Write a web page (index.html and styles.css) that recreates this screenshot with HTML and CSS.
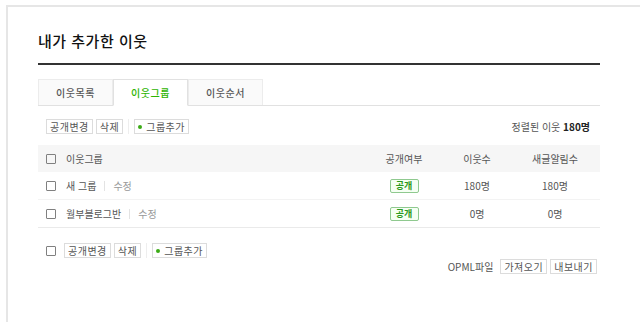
FILE: index.html
```html
<!DOCTYPE html>
<html lang="ko">
<head>
  <meta charset="UTF-8">
  <title>내가 추가한 이웃</title>
  <link rel="stylesheet" href="styles.css">
</head>
<body>
  <div class="frame">
    <div class="content">
      <h1 class="title">내가 추가한 이웃</h1>

      <ul class="tabs">
        <li class="tab">이웃목록</li>
        <li class="tab on">이웃그룹</li>
        <li class="tab">이웃순서</li>
      </ul>

      <div class="toolbar">
        <div class="btns">
          <span class="btn">공개변경</span>
          <span class="btn">삭제</span>
          <span class="sep"></span>
          <span class="btn"><i class="dot"></i>그룹추가</span>
        </div>
        <div class="count">정렬된 이웃 <b>180명</b></div>
      </div>

      <table class="grid">
        <thead>
          <tr>
            <th class="c-name"><span class="chk"></span>이웃그룹</th>
            <th class="c-open">공개여부</th>
            <th class="c-num">이웃수</th>
            <th class="c-alarm">새글알림수</th>
          </tr>
        </thead>
        <tbody>
          <tr>
            <td class="c-name"><span class="chk"></span>새 그룹<span class="bar"></span><span class="edit">수정</span></td>
            <td class="c-open"><span class="badge">공개</span></td>
            <td class="c-num">180명</td>
            <td class="c-alarm">180명</td>
          </tr>
          <tr>
            <td class="c-name"><span class="chk"></span>월부블로그반<span class="bar"></span><span class="edit">수정</span></td>
            <td class="c-open"><span class="badge">공개</span></td>
            <td class="c-num">0명</td>
            <td class="c-alarm">0명</td>
          </tr>
        </tbody>
      </table>

      <div class="footer-bar">
        <span class="chk"></span>
        <span class="btn">공개변경</span>
        <span class="btn">삭제</span>
        <span class="sep"></span>
        <span class="btn"><i class="dot"></i>그룹추가</span>
      </div>

      <div class="opml">
        <span class="opml-label">OPML파일</span>
        <span class="btn">가져오기</span>
        <span class="btn">내보내기</span>
      </div>
    </div>
  </div>
</body>
</html>
```

FILE: styles.css
```css
body {
  margin: 0;
  background: #fff;
  font-family: "Noto Sans CJK KR", "Noto Sans", sans-serif;
  font-size: 10px;
  color: #555;
}
.frame {
  margin: 5px 0 0 6px;
  border-top: 2px solid #e6e6e6;
  border-left: 2px solid #e6e6e6;
  height: 320px;
}
.content {
  width: 562px;
  margin-left: 30px;
  padding-top: 23px;
}
.title {
  margin: 0;
  font-size: 15px;
  font-weight: 500;
  color: #111;
  line-height: 22px;
  padding-bottom: 11px;
  border-bottom: 2px solid #333;
  letter-spacing: 0.5px;
}
.tabs {
  list-style: none;
  margin: 14px 0 0;
  padding: 0;
  display: flex;
  border-bottom: 1px solid #e1e1e1;
}
.tab {
  width: 73px;
  height: 25px;
  line-height: 25px;
  text-align: center;
  background: #fafafa;
  border: 1px solid #ececec;
  border-bottom: none;
  margin-bottom: -1px;
  color: #555;
  font-weight: 500;
  letter-spacing: 0.5px;
}
.tab.on {
  background: #fff;
  border-color: #e1e1e1;
  border-bottom: 1px solid #fff;
  color: #2db400;
}
.toolbar {
  display: flex;
  justify-content: space-between;
  align-items: center;
  height: 15px;
  margin-top: 13px;
  padding-left: 8px;
  padding-right: 10px;
}
.btns, .footer-bar {
  display: flex;
  align-items: center;
  gap: 3px;
}
.btn {
  display: inline-flex;
  align-items: center;
  height: 13px;
  padding: 0 3px;
  border: 1px solid #dcdcdc;
  background: #fff;
  color: #555;
  font-size: 10px;
  letter-spacing: 0.5px;
}
.sep {
  width: 1px;
  height: 15px;
  background: #eee;
  margin: 0 2px;
}
.dot {
  display: inline-block;
  width: 4px;
  height: 4px;
  border-radius: 50%;
  background: #3bab16;
  margin-right: 4px;
}
.count b {
  color: #222;
}
.grid {
  width: 100%;
  border-collapse: collapse;
  margin-top: 11px;
  line-height: 1;
}
.grid th {
  background: #f6f6f6;
  font-weight: normal;
  height: 27px;
  padding: 0;
  color: #555;
}
.grid td {
  height: 27px;
  padding: 0;
  border-bottom: 1px solid #eaeaea;
  color: #555;
}
.grid tbody tr:first-child td {
  border-bottom-color: #f3f3f3;
}
.grid .c-name {
  text-align: left;
  padding-left: 8px;
}
.c-open { width: 80px; text-align: center; }
.c-num { width: 66px; text-align: center; }
.c-alarm { width: 90px; text-align: center; }
.chk {
  display: inline-block;
  width: 8px;
  height: 8px;
  border: 1px solid #808080;
  border-radius: 1px;
  margin-right: 10px;
  vertical-align: -1px;
}
.bar {
  display: inline-block;
  width: 1px;
  height: 10px;
  background: #e3e3e3;
  margin: 0 8px;
  vertical-align: -1px;
}
.edit {
  color: #999;
}
.badge {
  display: inline-block;
  width: 27px;
  height: 12px;
  line-height: 12px;
  border: 1px solid #8fc98f;
  border-radius: 2px;
  background: #f5fff3;
  color: #2b9a20;
  font-size: 9px;
  font-weight: bold;
}
.footer-bar {
  margin-top: 15px;
  padding-left: 8px;
}
.footer-bar .chk {
  margin-right: 5px;
}
.opml {
  display: flex;
  justify-content: flex-end;
  align-items: center;
  gap: 3px;
  margin-top: 1px;
  padding-right: 3px;
}
.opml-label {
  margin-right: 4px;
}
```
